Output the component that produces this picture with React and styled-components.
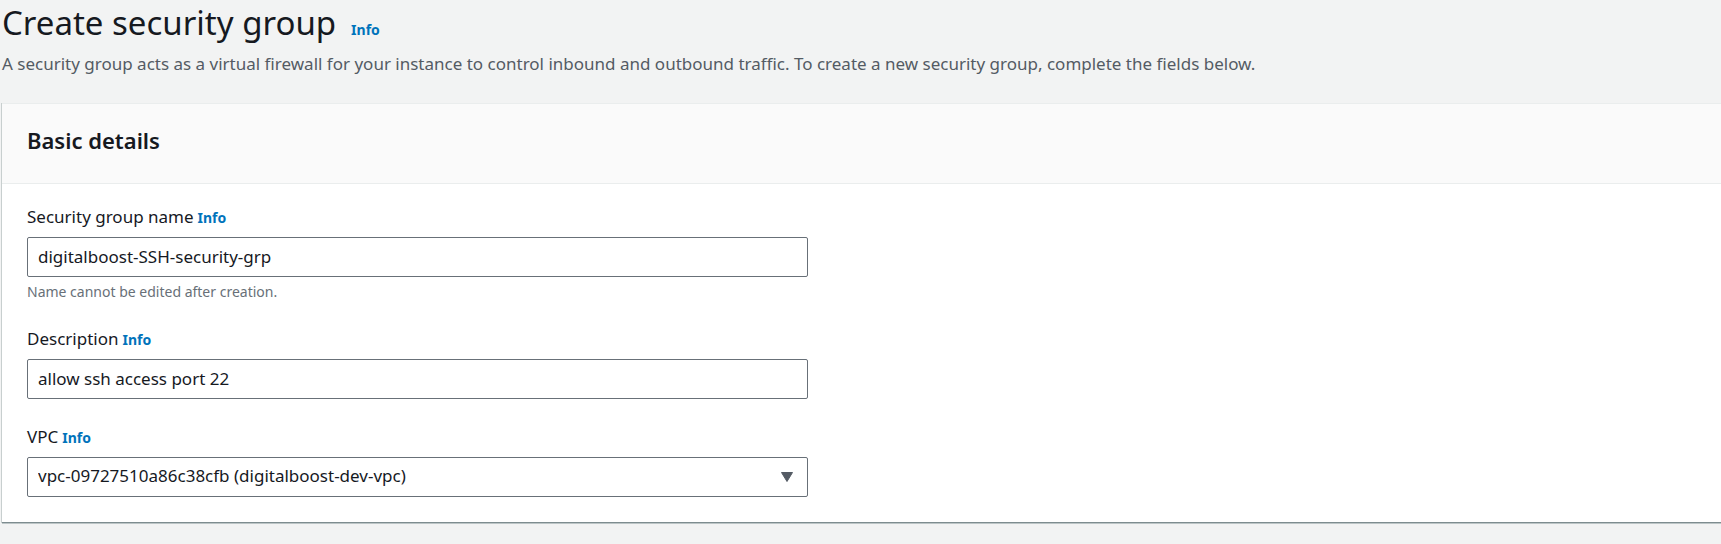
import React from "react";
import styled, { createGlobalStyle } from "styled-components";

const GlobalStyle = createGlobalStyle`
  *, *::before, *::after { box-sizing: border-box; }
  html { background: #f2f3f3; }
  body {
    margin: 0;
    background: #f2f3f3;
    color: #16191f;
    font-family: "Noto Sans", "Open Sans", sans-serif;
    font-size: 17px;
    line-height: 24px;
  }
`;

const Page = styled.main`
  padding: 0 0 20px 2px;
`;

const PageHeader = styled.header`
  padding-bottom: 27px;
`;

const TitleRow = styled.div`
  display: flex;
  align-items: baseline;
  gap: 15px;
`;

const Title = styled.h1`
  margin: 0;
  font-size: 33px;
  font-weight: 400;
  line-height: 46px;
`;

const Intro = styled.p`
  margin: 6px 0 0;
  color: #545b64;
`;

const InfoLink = styled.a`
  color: #0073bb;
  font-size: 14px;
  font-weight: 700;
  text-decoration: none;
`;

const Card = styled.section`
  background: #ffffff;
  border-top: 1px solid #eaeded;
  border-bottom: 1px solid #7d8c8f;
  box-shadow: -1px 0 0 #c8cfcf, 0 1px 0 #bcc5c6;
`;

const CardHeader = styled.div`
  padding: 22px 25px 29px;
  background: #fafafa;
  border-bottom: 1px solid #eaeded;
`;

const CardTitle = styled.h2`
  margin: 0;
  font-size: 22px;
  font-weight: 600;
  line-height: 28px;
`;

const Form = styled.form`
  display: flex;
  flex-direction: column;
  gap: 25px;
  padding: 20px 25px 25px;
`;

const Field = styled.div`
  display: flex;
  flex-direction: column;
  max-width: 781px;
`;

const LabelRow = styled.div`
  display: flex;
  align-items: baseline;
  gap: 4px;
  margin-bottom: 7px;
  line-height: 25px;
`;

const controlStyles = `
  width: 100%;
  height: 40px;
  margin: 0;
  padding: 0 10px 2px;
  border: 1px solid #687078;
  border-radius: 2px;
  background: #ffffff;
  color: #16191f;
  font: inherit;
`;

const TextInput = styled.input`
  ${controlStyles}
`;

const SelectBox = styled.div`
  display: grid;
  align-items: center;

  > * { grid-area: 1 / 1; }
`;

const Select = styled.select`
  ${controlStyles}
  appearance: none;
  padding-right: 40px;
`;

const Caret = styled.svg`
  justify-self: end;
  margin-right: 14px;
  pointer-events: none;
`;

const Hint = styled.p`
  margin: 5px 0 0;
  color: #687078;
  font-size: 14px;
  line-height: 19px;
`;

function FormField({ id, label, hint, children }) {
  return (
    <Field>
      <LabelRow>
        <label htmlFor={id}>{label}</label>
        <InfoLink href="#info">Info</InfoLink>
      </LabelRow>
      {children}
      {hint && <Hint id={`${id}-hint`}>{hint}</Hint>}
    </Field>
  );
}

export default function App() {
  return (
    <>
      <GlobalStyle />
      <Page>
        <PageHeader>
          <TitleRow>
            <Title>Create security group</Title>
            <InfoLink href="#info">Info</InfoLink>
          </TitleRow>
          <Intro>
            A security group acts as a virtual firewall for your instance to control inbound and
            outbound traffic. To create a new security group, complete the fields below.
          </Intro>
        </PageHeader>
        <Card>
          <CardHeader>
            <CardTitle>Basic details</CardTitle>
          </CardHeader>
          <Form>
            <FormField
              id="group-name"
              label="Security group name"
              hint="Name cannot be edited after creation."
            >
              <TextInput
                id="group-name"
                type="text"
                defaultValue="digitalboost-SSH-security-grp"
                aria-describedby="group-name-hint"
                spellCheck={false}
              />
            </FormField>
            <FormField id="description" label="Description">
              <TextInput
                id="description"
                type="text"
                defaultValue="allow ssh access port 22"
                spellCheck={false}
              />
            </FormField>
            <FormField id="vpc" label="VPC">
              <SelectBox>
                <Select id="vpc" defaultValue="vpc-09727510a86c38cfb">
                  <option value="vpc-09727510a86c38cfb">
                    vpc-09727510a86c38cfb (digitalboost-dev-vpc)
                  </option>
                </Select>
                <Caret width="14" height="12" viewBox="0 0 14 12" aria-hidden="true">
                  <path
                    d="M1.5 1.5h11L7 10.5z"
                    fill="#545b64"
                    stroke="#545b64"
                    strokeWidth="1"
                    strokeLinejoin="round"
                  />
                </Caret>
              </SelectBox>
            </FormField>
          </Form>
        </Card>
      </Page>
    </>
  );
}
